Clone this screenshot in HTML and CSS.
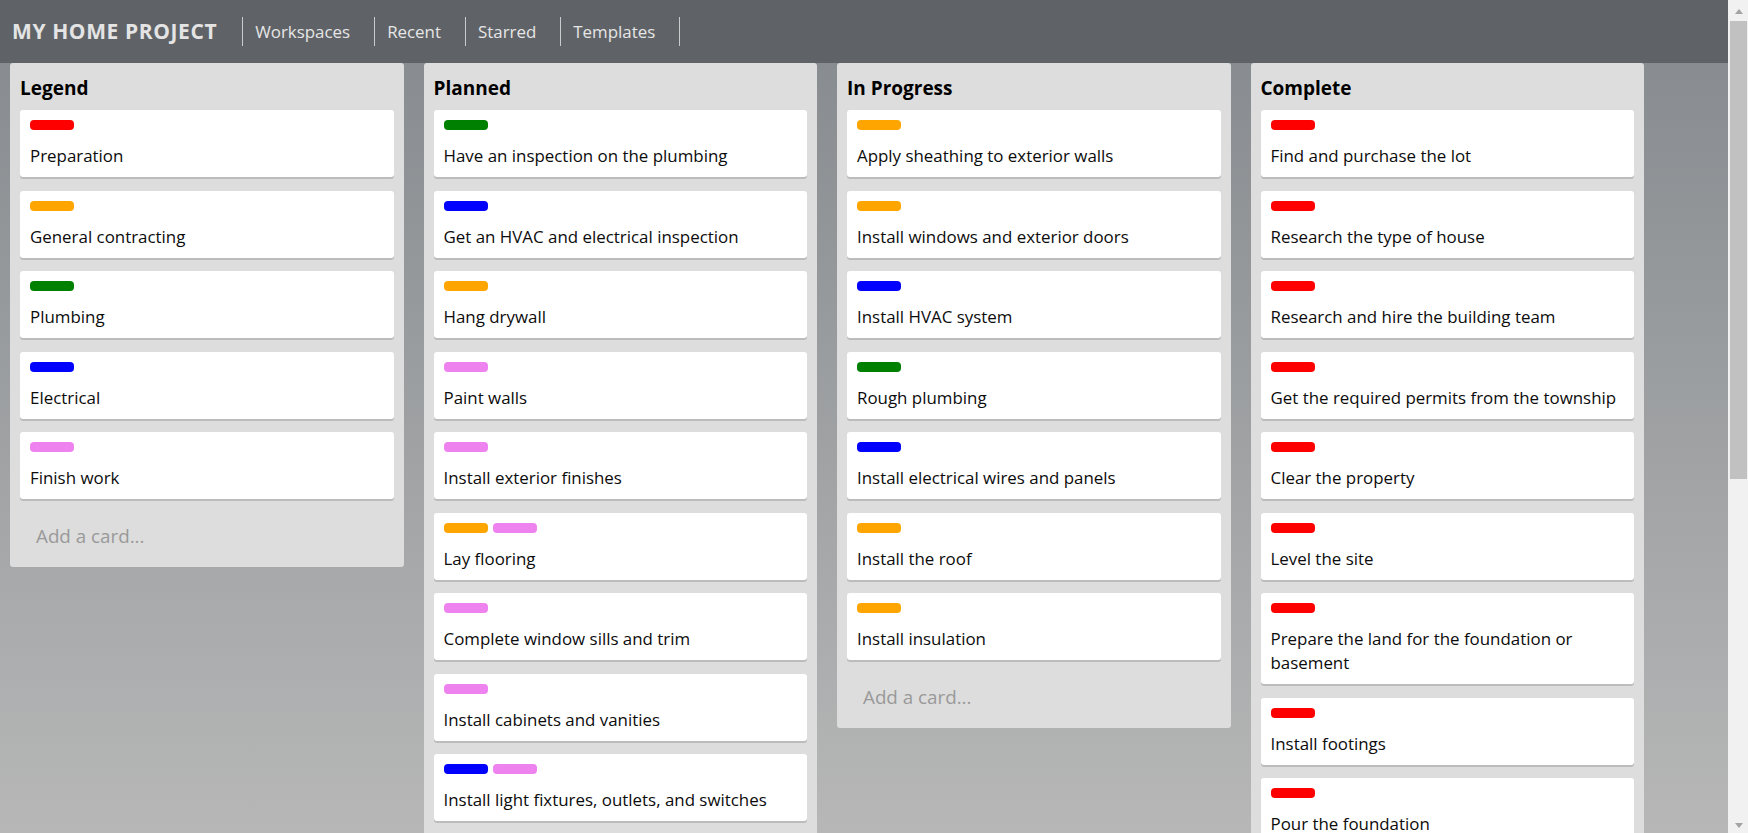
FILE: index.html
```html
<!DOCTYPE html>
<html lang="en">
<head>
<meta charset="utf-8">
<title>My Home Project</title>
<link rel="stylesheet" href="styles.css">
</head>
<body>
<header class="topbar">
  <div class="brand">MY HOME PROJECT</div>
  <nav class="nav">
    <a class="nav-link">Workspaces</a>
    <a class="nav-link">Recent</a>
    <a class="nav-link">Starred</a>
    <a class="nav-link">Templates</a>
  </nav>
</header>
<main class="board">
  <section class="list">
    <h2 class="list-title">Legend</h2>
    <div class="card"><div class="labels"><span class="label red"></span></div><p class="card-text">Preparation</p></div>
    <div class="card"><div class="labels"><span class="label orange"></span></div><p class="card-text">General contracting</p></div>
    <div class="card"><div class="labels"><span class="label green"></span></div><p class="card-text">Plumbing</p></div>
    <div class="card"><div class="labels"><span class="label blue"></span></div><p class="card-text">Electrical</p></div>
    <div class="card"><div class="labels"><span class="label violet"></span></div><p class="card-text">Finish work</p></div>
    <div class="add-card">Add a card...</div>
  </section>
  <section class="list">
    <h2 class="list-title">Planned</h2>
    <div class="card"><div class="labels"><span class="label green"></span></div><p class="card-text">Have an inspection on the plumbing</p></div>
    <div class="card"><div class="labels"><span class="label blue"></span></div><p class="card-text">Get an HVAC and electrical inspection</p></div>
    <div class="card"><div class="labels"><span class="label orange"></span></div><p class="card-text">Hang drywall</p></div>
    <div class="card"><div class="labels"><span class="label violet"></span></div><p class="card-text">Paint walls</p></div>
    <div class="card"><div class="labels"><span class="label violet"></span></div><p class="card-text">Install exterior finishes</p></div>
    <div class="card"><div class="labels"><span class="label orange"></span><span class="label violet"></span></div><p class="card-text">Lay flooring</p></div>
    <div class="card"><div class="labels"><span class="label violet"></span></div><p class="card-text">Complete window sills and trim</p></div>
    <div class="card"><div class="labels"><span class="label violet"></span></div><p class="card-text">Install cabinets and vanities</p></div>
    <div class="card"><div class="labels"><span class="label blue"></span><span class="label violet"></span></div><p class="card-text">Install light fixtures, outlets, and switches</p></div>
    <div class="card"><div class="labels"><span class="label green"></span><span class="label violet"></span></div><p class="card-text">Install plumbing fixtures</p></div>
    <div class="card"><div class="labels"><span class="label orange"></span></div><p class="card-text">Final walkthrough</p></div>
    <div class="add-card">Add a card...</div>
  </section>
  <section class="list">
    <h2 class="list-title">In Progress</h2>
    <div class="card"><div class="labels"><span class="label orange"></span></div><p class="card-text">Apply sheathing to exterior walls</p></div>
    <div class="card"><div class="labels"><span class="label orange"></span></div><p class="card-text">Install windows and exterior doors</p></div>
    <div class="card"><div class="labels"><span class="label blue"></span></div><p class="card-text">Install HVAC system</p></div>
    <div class="card"><div class="labels"><span class="label green"></span></div><p class="card-text">Rough plumbing</p></div>
    <div class="card"><div class="labels"><span class="label blue"></span></div><p class="card-text">Install electrical wires and panels</p></div>
    <div class="card"><div class="labels"><span class="label orange"></span></div><p class="card-text">Install the roof</p></div>
    <div class="card"><div class="labels"><span class="label orange"></span></div><p class="card-text">Install insulation</p></div>
    <div class="add-card">Add a card...</div>
  </section>
  <section class="list">
    <h2 class="list-title">Complete</h2>
    <div class="card"><div class="labels"><span class="label red"></span></div><p class="card-text">Find and purchase the lot</p></div>
    <div class="card"><div class="labels"><span class="label red"></span></div><p class="card-text">Research the type of house</p></div>
    <div class="card"><div class="labels"><span class="label red"></span></div><p class="card-text">Research and hire the building team</p></div>
    <div class="card"><div class="labels"><span class="label red"></span></div><p class="card-text">Get the required permits from the township</p></div>
    <div class="card"><div class="labels"><span class="label red"></span></div><p class="card-text">Clear the property</p></div>
    <div class="card"><div class="labels"><span class="label red"></span></div><p class="card-text">Level the site</p></div>
    <div class="card"><div class="labels"><span class="label red"></span></div><p class="card-text">Prepare the land for the foundation or basement</p></div>
    <div class="card"><div class="labels"><span class="label red"></span></div><p class="card-text">Install footings</p></div>
    <div class="card"><div class="labels"><span class="label red"></span></div><p class="card-text">Pour the foundation</p></div>
    <div class="card"><div class="labels"><span class="label red"></span></div><p class="card-text">Waterproof the foundation</p></div>
    <div class="card"><div class="labels"><span class="label red"></span></div><p class="card-text">Backfill around the foundation</p></div>
    <div class="card"><div class="labels"><span class="label orange"></span></div><p class="card-text">Frame the floor system</p></div>
    <div class="card"><div class="labels"><span class="label orange"></span></div><p class="card-text">Install the subfloor</p></div>
    <div class="card"><div class="labels"><span class="label orange"></span></div><p class="card-text">Frame the walls</p></div>
    <div class="card"><div class="labels"><span class="label orange"></span></div><p class="card-text">Frame the roof</p></div>
    <div class="add-card">Add a card...</div>
  </section>
</main>
<div class="scrollbar" aria-hidden="true">
  <div class="sb-button"><span class="sb-arrow-up"></span></div>
  <div class="sb-thumb"></div>
  <div class="sb-spacer"></div>
  <div class="sb-button sb-bottom"><span class="sb-arrow-down"></span></div>
</div>
</body>
</html>
```

FILE: styles.css
```css
html {
  background: linear-gradient(to bottom, #84898d 0, #b7b7b7 833px) fixed;
  background-color: #b7b7b7;
  scrollbar-width: none;
}

body {
  margin: 0;
  font-family: "Open Sans", "Noto Sans", sans-serif;
  color: #111;
}

.topbar {
  height: 63px;
  background: #5f6367;
  display: flex;
  align-items: center;
  padding-left: 12px;
  color: #e6e6e6;
}

.brand {
  font-size: 21px;
  font-weight: 700;
  letter-spacing: 0.6px;
  padding-right: 25px;
  border-right: 1px solid #c9cbcd;
  line-height: 29px;
  color: #e4e4e4;
}

.nav {
  display: flex;
  align-items: center;
}

.nav-link {
  font-size: 16.9px;
  padding: 0 24px 0 12px;
  border-right: 1px solid #c9cbcd;
  line-height: 29px;
  color: #e6e6e6;
}

.board {
  display: flex;
  align-items: flex-start;
  gap: 20px;
  padding: 0 10px 10px;
}

.list {
  flex: 0 0 393.5px;
  box-sizing: border-box;
  background: #dddddd;
  border-radius: 3px;
  padding: 10px;
}

.list-title {
  margin: 0 0 8px;
  padding-top: 2px;
  font-size: 19px;
  font-weight: 700;
  line-height: 27px;
  color: #000;
}

.card {
  background: #fff;
  border-radius: 3px;
  box-shadow: 0 2px 0 #bcbcbc;
  padding: 10px 10px 9px;
  margin-bottom: 13.5px;
}

.labels {
  display: flex;
  gap: 5px;
  height: 10px;
}

.label {
  width: 44px;
  height: 10px;
  border-radius: 4px;
}

.red { background: #ff0000; }
.orange { background: #ffa500; }
.green { background: #008000; }
.blue { background: #0000ff; }
.violet { background: #ee82ee; }

.card-text {
  margin: 14px 0 0;
  font-size: 16.9px;
  line-height: 24px;
  color: #0c0c0c;
}

.add-card {
  padding: 11px 16px 9px;
  font-size: 18.8px;
  line-height: 24px;
  color: #999;
}

.scrollbar {
  position: fixed;
  top: 0;
  right: 0;
  width: 20px;
  height: 100vh;
  background: #f1f1f1;
  display: flex;
  flex-direction: column;
}

.sb-button {
  height: 21px;
  flex: none;
  display: flex;
  justify-content: center;
  align-items: flex-start;
  padding-left: 1px;
  box-sizing: border-box;
}

.sb-bottom {
  align-items: flex-end;
}

.sb-arrow-up {
  margin-top: 9px;
  width: 0;
  height: 0;
  border-left: 4.5px solid transparent;
  border-right: 4.5px solid transparent;
  border-bottom: 5px solid #a3a3a3;
}

.sb-arrow-down {
  margin-bottom: 5px;
  width: 0;
  height: 0;
  border-left: 4.5px solid transparent;
  border-right: 4.5px solid transparent;
  border-top: 5px solid #a3a3a3;
}

.sb-thumb {
  height: 458px;
  margin-left: 2px;
  width: 17px;
  background: #c1c1c1;
  flex: none;
}

.sb-spacer {
  flex: 1;
}
```
